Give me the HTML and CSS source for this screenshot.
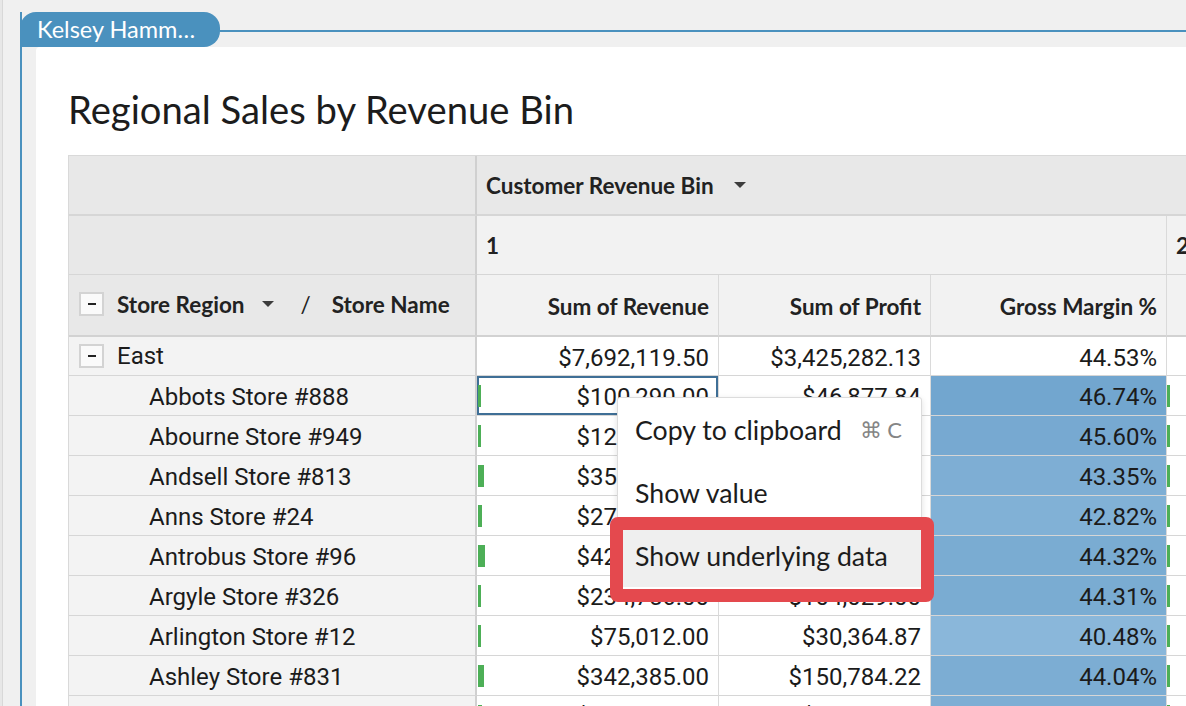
FILE: index.html
```html
<!DOCTYPE html>
<html lang="en">
<head>
<meta charset="utf-8">
<title>Regional Sales by Revenue Bin</title>
<link rel="stylesheet" href="styles.css">
</head>
<body>
<div class="app">
  <div class="rail"></div>
  <div class="workbook">
    <section class="group">
      <header class="group-head">
        <div class="tag">Kelsey Hamm…</div>
        <div class="rule"></div>
      </header>
      <div class="panel">
        <h1 class="title">Regional Sales by Revenue Bin</h1>
        <div class="table-wrap">
          <table class="pivot">
            <colgroup>
              <col class="c-label">
              <col class="c-rev">
              <col class="c-profit">
              <col class="c-gm">
              <col class="c-next">
            </colgroup>
            <thead>
              <tr class="h1">
                <th class="corner"></th>
                <th class="bin-title" colspan="4"><span class="hdr-inline">Customer Revenue Bin <span class="caret caret-bin"></span></span></th>
              </tr>
              <tr class="h2">
                <th class="corner"></th>
                <th class="bin" colspan="3">1</th>
                <th class="bin bin-next">2</th>
              </tr>
              <tr class="h3">
                <th class="corner corner-last">
                  <span class="hdr-inline">
                    <span class="toggle"></span>
                    <span class="hdr-name">Store Region</span>
                    <span class="caret caret-gap"></span>
                    <span class="slash">/</span>
                    <span class="hdr-name">Store Name</span>
                  </span>
                </th>
                <th class="measure">Sum of Revenue</th>
                <th class="measure">Sum of Profit</th>
                <th class="measure">Gross Margin %</th>
                <th class="measure measure-next"></th>
              </tr>
            </thead>
            <tbody>
              <tr class="group-row">
                <td class="label"><span class="hdr-inline"><span class="toggle"></span><span class="region">East</span></span></td>
                <td class="num">$7,692,119.50</td>
                <td class="num">$3,425,282.13</td>
                <td class="num">44.53%</td>
                <td class="next"></td>
              </tr>
              <tr>
                <td class="label store">Abbots Store #888</td>
                <td class="num rev selected"><div class="val"><span class="bar" style="width:3px"></span><span>$100,290.00</span></div></td>
                <td class="num">$46,877.84</td>
                <td class="num gm" style="background:#72a6cf">46.74%</td>
                <td class="next"><span class="bar" style="width:3px"></span></td>
              </tr>
              <tr>
                <td class="label store">Abourne Store #949</td>
                <td class="num rev"><div class="val"><span class="bar" style="width:3px"></span><span>$127,405.00</span></div></td>
                <td class="num">$58,096.68</td>
                <td class="num gm" style="background:#77a9d1">45.60%</td>
                <td class="next"><span class="bar" style="width:3px"></span></td>
              </tr>
              <tr>
                <td class="label store">Andsell Store #813</td>
                <td class="num rev"><div class="val"><span class="bar" style="width:6px"></span><span>$351,940.00</span></div></td>
                <td class="num">$152,566.81</td>
                <td class="num gm" style="background:#7eaed4">43.35%</td>
                <td class="next"><span class="bar" style="width:3px"></span></td>
              </tr>
              <tr>
                <td class="label store">Anns Store #24</td>
                <td class="num rev"><div class="val"><span class="bar" style="width:4px"></span><span>$271,880.00</span></div></td>
                <td class="num">$116,419.02</td>
                <td class="num gm" style="background:#81b1d6">42.82%</td>
                <td class="next"><span class="bar" style="width:3px"></span></td>
              </tr>
              <tr>
                <td class="label store">Antrobus Store #96</td>
                <td class="num rev"><div class="val"><span class="bar" style="width:7px"></span><span>$425,660.00</span></div></td>
                <td class="num">$188,652.51</td>
                <td class="num gm" style="background:#7aacd2">44.32%</td>
                <td class="next"><span class="bar" style="width:3px"></span></td>
              </tr>
              <tr>
                <td class="label store">Argyle Store #326</td>
                <td class="num rev"><div class="val"><span class="bar" style="width:3px"></span><span>$234,756.00</span></div></td>
                <td class="num">$104,029.00</td>
                <td class="num gm" style="background:#7aacd2">44.31%</td>
                <td class="next"><span class="bar" style="width:3px"></span></td>
              </tr>
              <tr>
                <td class="label store">Arlington Store #12</td>
                <td class="num rev"><div class="val"><span class="bar" style="width:3px"></span><span>$75,012.00</span></div></td>
                <td class="num">$30,364.87</td>
                <td class="num gm" style="background:#8ab7da">40.48%</td>
                <td class="next"><span class="bar" style="width:3px"></span></td>
              </tr>
              <tr>
                <td class="label store">Ashley Store #831</td>
                <td class="num rev"><div class="val"><span class="bar" style="width:6px"></span><span>$342,385.00</span></div></td>
                <td class="num">$150,784.22</td>
                <td class="num gm" style="background:#7cadd3">44.04%</td>
                <td class="next"><span class="bar" style="width:3px"></span></td>
              </tr>
              <tr>
                <td class="label store">Ashton Store #410</td>
                <td class="num rev"><div class="val"><span class="bar" style="width:4px"></span><span>$198,120.00</span></div></td>
                <td class="num">$86,410.55</td>
                <td class="num gm" style="background:#7eaed4">43.62%</td>
                <td class="next"><span class="bar" style="width:3px"></span></td>
              </tr>
            </tbody>
          </table>

          <div class="ctx-menu">
            <div class="ctx-item"><span>Copy to clipboard</span><span class="shortcut">⌘ C</span></div>
            <div class="ctx-item"><span>Show value</span></div>
            <div class="ctx-item active"><span>Show underlying data</span></div>
          </div>
          <div class="callout"></div>
        </div>
      </div>
    </section>
  </div>
</div>
</body>
</html>
```

FILE: styles.css
```css
* { box-sizing: border-box; }

html, body {
  margin: 0;
  padding: 0;
  height: 706px;
  overflow: hidden;
  background: #f0f0f0;
  font-family: Roboto, "Liberation Sans", sans-serif;
  color: #1b1b1b;
}

.app {
  display: flex;
  height: 706px;
}

.rail {
  width: 3px;
  flex: none;
  background: #e7e7e7;
  border-right: 1px solid #d8d8d8;
}

.workbook {
  flex: 1;
  min-width: 0;
  padding: 12px 0 0 17px;
  display: flex;
}

.group {
  flex: 1;
  min-width: 0;
  border-left: 2px solid #4a91be;
  display: flex;
  flex-direction: column;
}

.group-head {
  display: flex;
  align-items: center;
  height: 35px;
  margin-left: -2px;
  flex: none;
}

.tag {
  height: 35px;
  width: 200px;
  background: #4a91be;
  color: #fff;
  font-family: Lato, "Noto Sans", sans-serif;
  font-size: 23.5px;
  line-height: 35px;
  padding-left: 17px;
  border-radius: 16px 16px 16px 0;
  white-space: nowrap;
  flex: none;
}

.rule {
  flex: 1;
  height: 2px;
  background: #4a91be;
  margin-top: 3px;
}

.panel {
  flex: 1;
  margin-left: 14px;
  background: #fff;
  border-top-left-radius: 4px;
  padding: 0 0 0 32px;
  overflow: hidden;
  min-width: 0;
}

.title {
  margin: 37px 0 0 0;
  font-family: Lato, "Noto Sans", sans-serif;
  font-weight: 400;
  font-size: 38.2px;
  line-height: 50px;
  height: 71px;
  color: #1c1c1c;
}

.table-wrap {
  position: relative;
  width: 1200px;
}

.pivot {
  table-layout: fixed;
  width: 1220px;
  border-collapse: separate;
  border-spacing: 0;
  border-top: 1px solid #d9d9d9;
  border-left: 1px solid #d9d9d9;
}

.c-label { width: 408px; }
.c-rev { width: 242px; }
.c-profit { width: 212px; }
.c-gm { width: 236px; }
.c-next { width: 122px; }

.pivot th,
.pivot td {
  padding: 0 9px;
  border-right: 1px solid #dadada;
  border-bottom: 1px solid #d6d6d6;
  white-space: nowrap;
  overflow: hidden;
}

.pivot th {
  font-family: Lato, "Noto Sans", sans-serif;
  font-weight: 700;
  font-size: 22.5px;
  color: #222;
  text-align: left;
}

.h1 th { height: 60px; background: #e8e8e8; border-bottom: 2px solid #d6d6d6; }
.h2 th { height: 59px; background: #f2f2f2; }
.h3 th { height: 62px; background: #f2f2f2; border-bottom: 2px solid #d2d2d2; padding-top: 2px; }

.pivot th.corner {
  background: #e8e8e8;
  border-right: 2px solid #d0d0d0;
}

.bin-title { padding-left: 8px; }
.bin { padding-left: 8px; }

.hdr-inline {
  display: inline-flex;
  align-items: center;
}

.caret {
  display: inline-block;
  width: 0;
  height: 0;
  border-left: 6px solid transparent;
  border-right: 6px solid transparent;
  border-top: 6px solid #3c3c3c;
}

.caret-bin { margin-left: 20px; }
.caret-gap { margin-left: 17px; }

.slash {
  font-weight: 400;
  margin: 0 21px 0 27px;
}

.toggle {
  position: relative;
  width: 25px;
  height: 24px;
  border: 2px solid #d3d3d3;
  background: #fafafa;
  margin: 0 13px 0 1px;
  flex: none;
}

.toggle::after {
  content: "";
  position: absolute;
  left: 7px;
  top: 9px;
  width: 8px;
  height: 2px;
  background: #222;
}

.measure { text-align: right !important; }

.pivot td {
  height: 40px;
  padding-top: 3px;
  font-size: 24px;
  color: #1b1b1b;
}

.group-row td { height: 39px; padding-top: 4px; }

.pivot td.label {
  background: #f3f3f3;
  border-right: 2px solid #d0d0d0;
}

.pivot td.store { padding-left: 80px; }

.num { text-align: right; background: #fff; }

.pivot td.rev { padding-left: 1px; padding-top: 0; }

.pivot td.rev .val span:last-child { padding-top: 3px; }

.val {
  display: flex;
  align-items: center;
  justify-content: space-between;
}

.bar {
  display: block;
  height: 22px;
  background: #4daf57;
}

.pivot td.next { padding-left: 0; padding-top: 0; }

.selected {
  box-shadow: inset 0 0 0 2px #3f6f96;
}

.ctx-menu {
  position: absolute;
  left: 549px;
  top: 242px;
  width: 305px;
  height: 195px;
  background: #fff;
  border: 1px solid #dcdcdc;
  border-radius: 3px;
  box-shadow: 0 2px 6px rgba(0, 0, 0, 0.12);
  font-family: Lato, "Noto Sans", sans-serif;
  font-size: 26.7px;
  color: #1c1c1c;
}

.ctx-item {
  height: 63px;
  display: flex;
  align-items: center;
  justify-content: space-between;
  padding: 0 19px 0 17px;
}

.ctx-item.active { background: #efefef; }

.shortcut {
  color: #858585;
  font-size: 22px;
}

.callout {
  position: absolute;
  left: 542px;
  top: 362px;
  width: 324px;
  height: 85px;
  border: 13px solid #e4494e;
  border-radius: 8px;
}
```
